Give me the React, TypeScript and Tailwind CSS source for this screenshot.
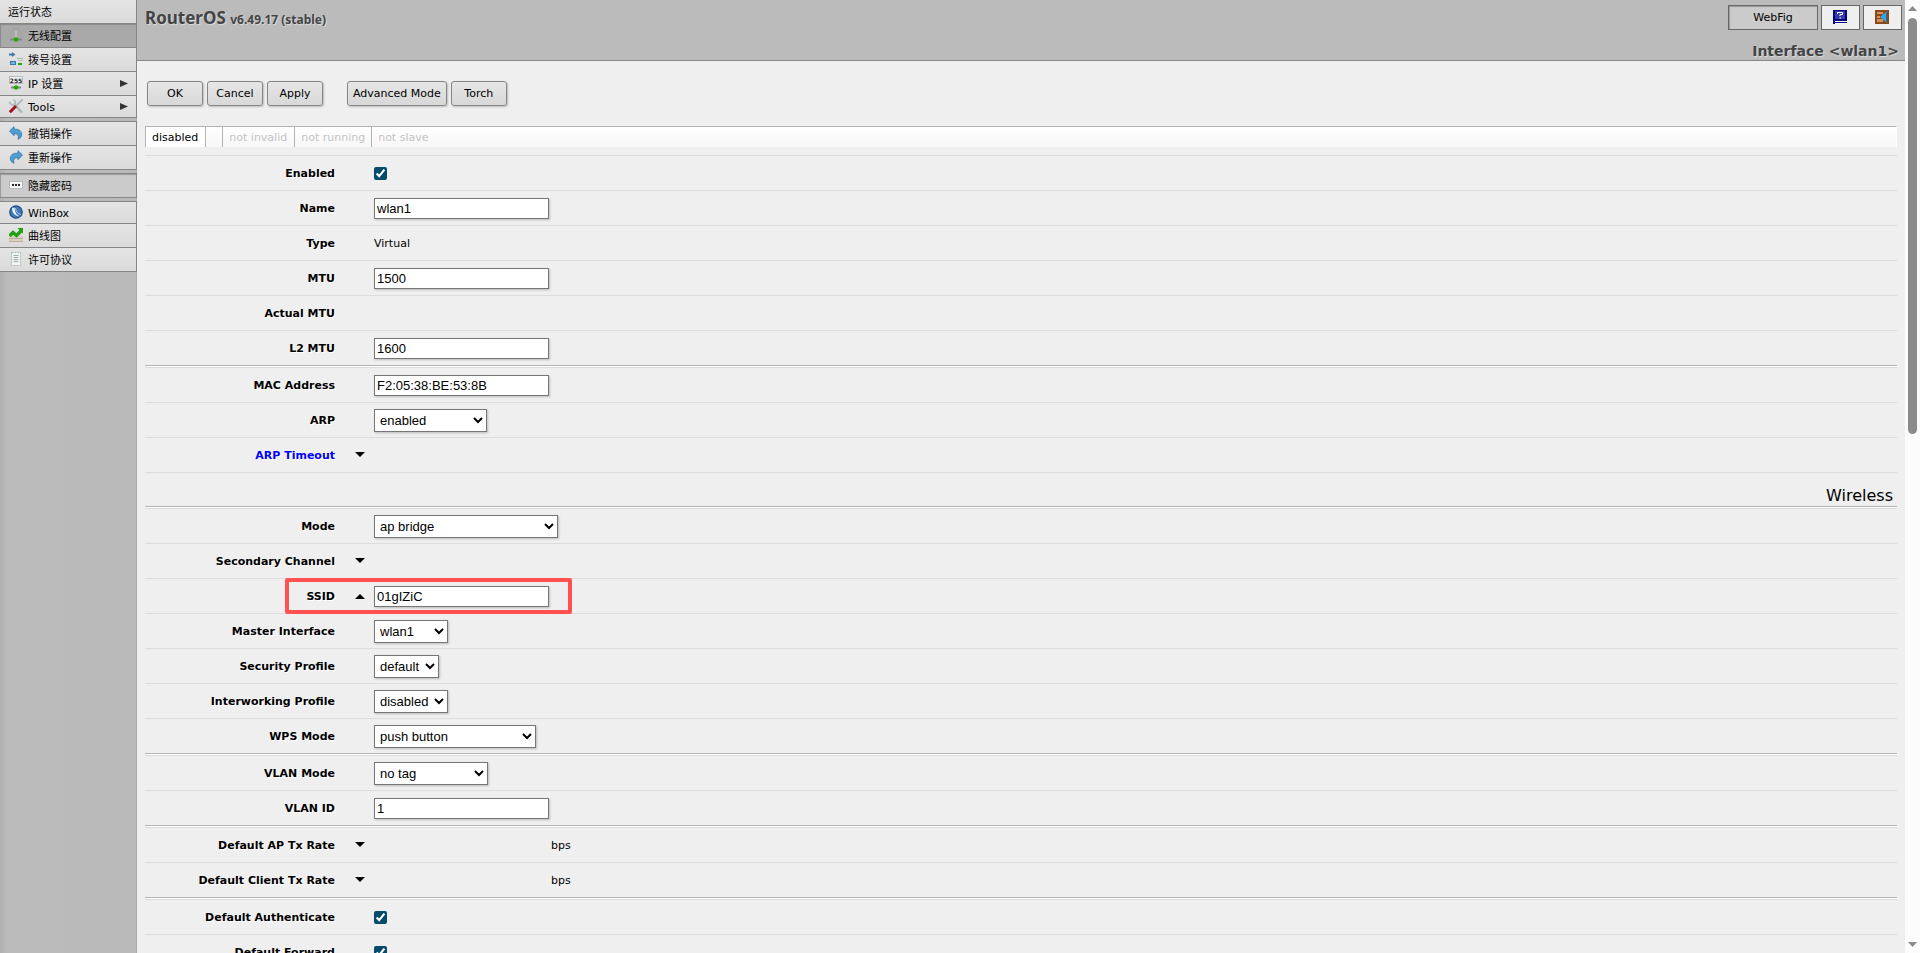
import React, { useState } from "react";

type IconName = "wireless" | "dial" | "ip" | "tools" | "undo" | "redo" | "password" | "winbox" | "graph" | "license";

interface MenuItem { label: string; icon?: IconName; arrow?: boolean; state?: "active" | "pressed" }

const MENU: MenuItem[][] = [
  [
    { label: "运行状态" },
    { label: "无线配置", icon: "wireless", state: "active" },
    { label: "拨号设置", icon: "dial" },
    { label: "IP 设置", icon: "ip", arrow: true },
    { label: "Tools", icon: "tools", arrow: true },
  ],
  [
    { label: "撤销操作", icon: "undo" },
    { label: "重新操作", icon: "redo" },
  ],
  [{ label: "隐藏密码", icon: "password", state: "pressed" }],
  [
    { label: "WinBox", icon: "winbox" },
    { label: "曲线图", icon: "graph" },
    { label: "许可协议", icon: "license" },
  ],
];

const ICONS: Record<IconName, React.ReactNode> = {
  wireless: (
    <>
      <path d="M2.500 6Q2 1.500 5 0.500H9Q12 1.500 11.500 6" fill="none" stroke="#8f9a8f" opacity="0.6" />
      <path d="M7 3v7" stroke="#b9c1b9" strokeWidth="2" />
      <path d="M1 11.500h12" stroke="#7d8a80" strokeWidth="2" />
      <circle cx="7" cy="11.500" r="2.200" fill="#1fa800" />
    </>
  ),
  dial: (
    <>
      <path d="M0 2.500h3" stroke="#3d78a8" strokeWidth="2" />
      <path d="M3 0l3.500 2.500L3 5z" fill="#3d78a8" />
      <rect x="1.500" y="9.500" width="5" height="3" fill="#6db3e8" stroke="#3577ad" />
      <path d="M8 6.500h6" stroke="#a9b5b3" />
      <path d="M9 8.500h5" stroke="#b5bfbd" />
      <path d="M9 12h4" stroke="#1fa800" strokeWidth="2" />
    </>
  ),
  ip: (
    <>
      <rect x="0.500" y="0.500" width="13" height="7" fill="#f4f4f4" stroke="#b4bcbb" />
      <text x="7" y="6.500" textAnchor="middle" fontSize="6" fontWeight="bold" fill="#222">255</text>
      <path d="M2 11.500h10" stroke="#7d8a80" strokeWidth="2" />
      <circle cx="7" cy="11.500" r="2.200" fill="#1fa800" />
    </>
  ),
  tools: (
    <>
      <path d="M5 5l8 8.500" stroke="#adb8b8" strokeWidth="2.500" />
      <path d="M0.800 2.500v1.500l2 2h1.500l2-2V2.500l-1.800-2" fill="none" stroke="#adb8b8" strokeWidth="1.600" />
      <path d="M13.500 0.500L7 7" stroke="#adb8b8" strokeWidth="1.800" />
      <path d="M7 7L0.800 13.200" stroke="#a01222" strokeWidth="3" />
    </>
  ),
  undo: (
    <path d="M0.500 5L5 0.700V3Q13 3 12.700 9Q12.500 12 9 13.300Q11 8 5 7.500V9.700z" fill="#4d9ed3" stroke="#3874a3" strokeWidth="0.800" />
  ),
  redo: (
    <path d="M13.500 5L9 0.700V3Q1 3 1.300 9Q1.500 12 5 13.300Q3 8 9 7.500V9.700z" fill="#4d9ed3" stroke="#3874a3" strokeWidth="0.800" />
  ),
  password: (
    <>
      <rect x="0.500" y="3.500" width="13" height="7" fill="#f6f6f6" stroke="#b4bcbb" />
      <path d="M3 6h2v2H3zM6 6h2v2H6zM9 6h2v2H9z" fill="#222" />
    </>
  ),
  winbox: (
    <>
      <circle cx="7" cy="7" r="6.200" fill="#3f78b5" stroke="#1f4f88" strokeWidth="1.300" />
      <path d="M3 2.500Q2.500 11 11.500 11.500Q6 10 5.500 3z" fill="#e8f2fb" />
      <path d="M6.500 3Q7 8.500 12 9.500" fill="none" stroke="#a8cdee" />
    </>
  ),
  graph: (
    <>
      <path d="M0 8h14v6H0z" fill="#d9d0bb" />
      <path d="M0 10.500h14M0 13.500h14" stroke="#b8b0a2" />
      <path d="M0.500 8L4 4.500l3.500 3L12 3" fill="none" stroke="#1fa010" strokeWidth="3.400" />
      <path d="M8.500 0H14v5.500z" fill="#1fa010" />
    </>
  ),
  license: (
    <>
      <path d="M2.500 0.500v13h9v-13z" fill="#f1f5f4" stroke="#aab8b8" strokeDasharray="2 1" />
      <path d="M4.500 3.500h5M4.500 5.500h5M4.500 7.500h5M4.500 9.500h5" stroke="#9caaaa" />
    </>
  ),
};

function Sidebar() {
  return (
    <nav className="flex w-[137px] shrink-0 flex-col gap-[3px] border-r border-[#a9a9a9] bg-linear-to-r from-[#b0b0b0] via-[#bbbbbb] via-5% to-[#b9b9b9]">
      {MENU.map((group, i) => (
        <ul key={i} className={`-mr-px border-r border-[#868686] ${i > 0 ? "border-t" : ""}`}>
          {group.map(item => (
            <li key={item.label}>
              <a
                href="#"
                className={`flex items-center border-b border-[#868686] px-2 text-[11px] text-black ${
                  /^[A-Z]\w+$/.test(item.label) ? "h-[22px]" : "h-6"
                } ${
                  item.state === "active"
                    ? "bg-[#a9a9a9] shadow-[inset_1px_1px_1px_#8a8a8a]"
                    : item.state === "pressed"
                      ? "bg-[#cbcbcb] shadow-[inset_1px_1px_1px_#999]"
                      : "bg-linear-to-b from-[#e4e4e4] to-[#dbdbdb]"
                }`}
              >
                {item.icon && (
                  <svg className="mr-[5px] mb-px ml-px size-[14px] shrink-0" viewBox="0 0 14 14" aria-hidden="true">{ICONS[item.icon]}</svg>
                )}
                <span className="grow pt-[3px]">{item.label}</span>
                {item.arrow && (
                  <svg className="h-[7px] w-2" viewBox="0 0 8 7" aria-hidden="true"><path d="M0 0l8 3.500-8 3.500z" fill="#333" /></svg>
                )}
              </a>
            </li>
          ))}
        </ul>
      ))}
    </nav>
  );
}

const HEADER_BUTTON = "flex h-[25px] w-[39px] items-start border border-[#666] bg-[#efefef] pt-1 pl-[11px]";

function Header() {
  return (
    <header className="flex h-[61px] items-start justify-between border-b border-[#868686] bg-[#bbbbbb] pr-[3px] pl-2 font-bold text-[#444]">
      <h1 className="pt-2 font-['Noto_Sans',sans-serif] text-[17px] leading-5 [text-shadow:1px_1px_1px_#ddd]">
        RouterOS <small className="text-xs">v6.49.17 (stable)</small>
      </h1>
      <div className="flex flex-col items-end pt-[5px]">
        <div className="flex gap-[3px]">
          <button className="h-[25px] w-[90px] border border-[#666] bg-[#cbcbcb] pt-[2px] text-[11px] font-normal text-black shadow-[inset_1px_1px_1px_#999]">WebFig</button>
          <button aria-label="Manual" className={HEADER_BUTTON}>
            <svg className="size-[14px]" viewBox="0 0 14 14" aria-hidden="true">
              <path d="M0 0h14v14H0z" fill="#00007b" />
              <path d="M2 1h10v8H2z" fill="#3838a8" />
              <path d="M4.500 4V2.500h5v2h-2.500V6M6.500 8h1.500" fill="none" stroke="#fff" />
              <path d="M2 11h12v1H2zM2 13h12v1H2z" fill="#fff" />
            </svg>
          </button>
          <button aria-label="Logout" className={HEADER_BUTTON}>
            <svg className="size-[14px]" viewBox="0 0 14 14" aria-hidden="true">
              <path d="M0 0h14v14H0z" fill="#8a4818" />
              <path d="M2 2h6v2H2zM2 6h3v2H2zM2 9h6v3H2z" fill="#d3925c" />
              <path d="M5 7l7-6v12z" fill="#31a5e8" />
              <path d="M11.500 2v10" stroke="#2a6c9c" />
            </svg>
          </button>
        </div>
        <h2 className="pt-3 pr-[3px] text-sm leading-[18px] [text-shadow:1px_1px_1px_#ddd]">Interface &lt;wlan1&gt;</h2>
      </div>
    </header>
  );
}

const BUTTON =
  "h-[25px] min-w-14 rounded-[3px] border border-[#868686] bg-linear-to-b from-[#e6e6e6] to-[#d8d8d8] px-[5px] pt-[2px] text-[11px] text-black shadow-[1px_1px_2px_#bbb]";

function Toolbar() {
  return (
    <div className="flex gap-1 px-[2px] pt-5">
      <button className={BUTTON}>OK</button>
      <button className={BUTTON}>Cancel</button>
      <button className={BUTTON}>Apply</button>
      <span className="w-4" />
      <button className={BUTTON}>Advanced Mode</button>
      <button className={BUTTON}>Torch</button>
    </div>
  );
}

function StatusBar() {
  return (
    <ul className="mt-5 flex h-[21px] shrink-0 border-t border-r border-l border-t-[#b3b3b3] border-r-white border-l-[#b3b3b3] bg-linear-to-b from-white to-[#f7f7f7] text-[11px] leading-[21px] text-[#c3c3c3]">
      <li className="border-r border-[#b3b3b3] bg-white pr-[7px] pl-[6px] text-black">disabled</li>
      <li className="w-[17px] border-r border-[#b3b3b3]" />
      <li className="border-r border-[#b3b3b3] pr-[7px] pl-[6px]">not invalid</li>
      <li className="border-r border-[#b3b3b3] px-[6px]">not running</li>
      <li className="px-[6px]">not slave</li>
    </ul>
  );
}

function Row({ id, label, link, toggle, highlight, children }: {
  id?: string; label: string; link?: boolean; toggle?: "up" | "down"; highlight?: boolean; children?: React.ReactNode;
}) {
  return (
    <div className="relative flex h-[35px] shrink-0 items-center border-t border-[#dcdcdc] text-[11px]">
      <label htmlFor={id} className={`w-[190px] pt-[2px] text-right font-bold [text-shadow:1px_1px_0_#fff] ${link ? "text-[#0000ff]" : "text-black"}`}>
        {label}
      </label>
      <div className="flex w-[39px] justify-end pr-[9px]">
        {toggle && (
          <button type="button" aria-label={`Toggle ${label}`}>
            <svg className="h-2 w-[10px]" viewBox="0 0 10 8" aria-hidden="true">
              <path d={toggle === "down" ? "M0 1h10L5 6z" : "M0 7h10L5 2z"} fill="#000" />
            </svg>
          </button>
        )}
      </div>
      {children}
      {highlight && <div className="pointer-events-none absolute -top-px left-[140px] z-10 h-9 w-[287px] rounded-[2px] border-4 border-[#ff5151]" />}
    </div>
  );
}

function TextRow({ id, label, initial, toggle, highlight }: {
  id: string; label: string; initial: string; toggle?: "up" | "down"; highlight?: boolean;
}) {
  const [value, setValue] = useState(initial);
  return (
    <Row id={id} label={label} toggle={toggle} highlight={highlight}>
      <input id={id} type="text" value={value} onChange={e => setValue(e.target.value)}
        className="h-[21px] w-[175px] border border-[#767676] bg-white px-[2px] font-['Liberation_Sans',Arial,sans-serif] text-[13px] text-black shadow-[1px_1px_2px_#bbb]" />
    </Row>
  );
}

function SelectRow({ id, label, value, width }: { id: string; label: string; value: string; width: string }) {
  return (
    <Row id={id} label={label}>
      <select id={id} defaultValue={value}
        className={`h-[23px] border border-[#767676] bg-white px-px font-['Liberation_Sans',Arial,sans-serif] text-[13px] text-black shadow-[1px_1px_2px_#bbb] ${width}`}>
        <option>{value}</option>
      </select>
    </Row>
  );
}

function CheckRow({ id, label }: { id: string; label: string }) {
  const [checked, setChecked] = useState(true);
  return (
    <Row id={id} label={label}>
      <input id={id} type="checkbox" checked={checked} onChange={e => setChecked(e.target.checked)}
        className="size-[13px] accent-[#044b6c]" />
    </Row>
  );
}

function Separator() {
  return <div className="h-[2px] shrink-0 border-t border-[#b3b3b3] bg-white" />;
}

function Scrollbar() {
  return (
    <div className="flex w-[15px] shrink-0 flex-col items-center bg-[#fcfcfc] py-[6px]" aria-hidden="true">
      <svg className="h-[5px] w-[9px]" viewBox="0 0 9 5"><path d="M0 5h9L4.500 0z" fill="#8b8b8b" /></svg>
      <div className="mt-[7px] w-[9px] grow-9 rounded-full bg-[#8b8b8b]" />
      <div className="grow-11" />
      <svg className="h-[5px] w-[9px]" viewBox="0 0 9 5"><path d="M0 0h9L4.500 5z" fill="#8b8b8b" /></svg>
    </div>
  );
}

export default function App() {
  return (
    <div className="flex h-screen overflow-hidden bg-[#efefef] font-['DejaVu_Sans','Noto_Sans_CJK_SC',sans-serif] text-[11px] text-black">
      <Sidebar />
      <main className="flex min-w-0 grow flex-col">
        <Header />
        <div className="flex min-h-0 grow flex-col overflow-hidden px-2">
          <Toolbar />
          <StatusBar />
          <form className="mt-2 flex flex-col">
            <CheckRow id="enabled" label="Enabled" />
            <TextRow id="name" label="Name" initial="wlan1" />
            <Row label="Type"><span className="pt-[2px]">Virtual</span></Row>
            <TextRow id="mtu" label="MTU" initial="1500" />
            <Row label="Actual MTU" />
            <TextRow id="l2mtu" label="L2 MTU" initial="1600" />
            <Separator />
            <TextRow id="mac" label="MAC Address" initial="F2:05:38:BE:53:8B" />
            <SelectRow id="arp" label="ARP" value="enabled" width="w-[113px]" />
            <Row label="ARP Timeout" link toggle="down" />
            <h3 className="h-[34px] border-t border-[#dcdcdc] pt-[13px] pr-1 text-right text-base leading-5">Wireless</h3>
            <Separator />
            <SelectRow id="mode" label="Mode" value="ap bridge" width="w-[184px]" />
            <Row label="Secondary Channel" toggle="down" />
            <TextRow id="ssid" label="SSID" initial="01gIZiC" toggle="up" highlight />
            <SelectRow id="master" label="Master Interface" value="wlan1" width="w-[74px]" />
            <SelectRow id="security" label="Security Profile" value="default" width="w-[65px]" />
            <SelectRow id="interworking" label="Interworking Profile" value="disabled" width="w-[74px]" />
            <SelectRow id="wps" label="WPS Mode" value="push button" width="w-[162px]" />
            <Separator />
            <SelectRow id="vlan-mode" label="VLAN Mode" value="no tag" width="w-[114px]" />
            <TextRow id="vlan-id" label="VLAN ID" initial="1" />
            <Separator />
            <Row label="Default AP Tx Rate" toggle="down"><span className="pt-[2px] pl-[177px]">bps</span></Row>
            <Row label="Default Client Tx Rate" toggle="down"><span className="pt-[2px] pl-[177px]">bps</span></Row>
            <Separator />
            <CheckRow id="authenticate" label="Default Authenticate" />
            <CheckRow id="forward" label="Default Forward" />
          </form>
        </div>
      </main>
      <Scrollbar />
    </div>
  );
}
